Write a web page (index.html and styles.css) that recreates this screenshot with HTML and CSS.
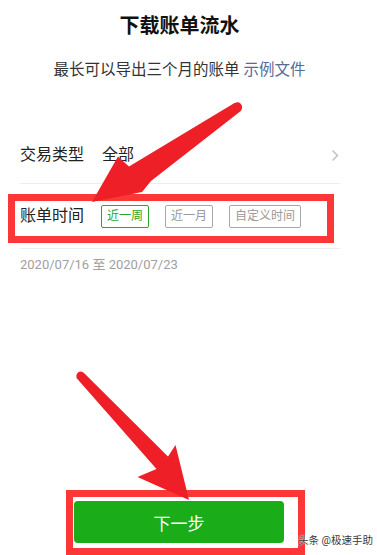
FILE: index.html
```html
<!DOCTYPE html>
<html lang="zh-CN">
<head>
<meta charset="utf-8">
<title>下载账单流水</title>
<link rel="stylesheet" href="styles.css">
</head>
<body>
<div class="page">
  <header class="header">
    <h1 class="title">下载账单流水</h1>
    <p class="subtitle">最长可以导出三个月的账单 <span class="link">示例文件</span></p>
  </header>
  <div class="list">
    <div class="row row-type">
      <span class="label">交易类型</span>
      <span class="value">全部</span>
      <svg class="chevron" width="8" height="13" viewBox="0 0 8 13"><path d="M1.5 1.5 L6.5 6.5 L1.5 11.5" fill="none" stroke="#c4c4c4" stroke-width="1.6"/></svg>
    </div>
    <div class="row row-time">
      <span class="label">账单时间</span>
      <div class="tags">
        <span class="tag tag-active">近一周</span>
        <span class="tag">近一月</span>
        <span class="tag">自定义时间</span>
      </div>
    </div>
  </div>
  <p class="range">2020/07/16 至 2020/07/23</p>
  <button class="next">下一步</button>
</div>

<div class="mark mark-row"></div>
<div class="mark mark-btn"></div>
<div class="watermark">头条 @极速手助</div>

<svg class="arrows" width="377" height="555" viewBox="0 0 377 555">
  <path d="M234.5 103 Q240 100.5 242 106 Q242.5 110 239.5 112 L151 181 L142 192 L92 202 L118 156.5 L129 166.5 Z" fill="#ee1f27"/>
  <path d="M76.5 378 Q75.5 372 81 371.5 Q84 372 85 374 L168 456.5 L175.5 445 L189 500 L137.5 477 L156.5 469 Z" fill="#ee1f27"/>
</svg>
</body>
</html>
```

FILE: styles.css
```css
html, body {
  margin: 0;
  padding: 0;
  background: #ffffff;
}

body {
  width: 377px;
  height: 555px;
  position: relative;
  overflow: hidden;
  font-family: "Roboto", "Noto Sans CJK SC", sans-serif;
  color: #222;
}

.page {
  width: 360px;
}

.header {
  padding-top: 12px;
  text-align: center;
  margin-left: -1px;
}

.title {
  margin: 0;
  font-size: 20px;
  line-height: 28px;
  font-weight: 700;
  color: #111;
}

.subtitle {
  margin: 19px 0 0;
  font-size: 15.5px;
  line-height: 22px;
  color: #333;
}

.link {
  color: #576b95;
}

.list {
  margin-top: 46px;
  padding: 0 20px;
}

.row {
  display: flex;
  align-items: center;
  border-bottom: 1px solid #ededed;
}

.row-type {
  height: 56px;
}

.row-time {
  height: 64px;
}

.label {
  font-size: 16px;
  line-height: 22px;
  color: #222;
}

.value {
  margin-left: 18px;
  font-size: 16px;
  line-height: 22px;
  color: #222;
}

.chevron {
  margin-left: auto;
  margin-right: 1px;
  margin-top: 1px;
}

.tags {
  display: flex;
  gap: 16px;
  margin-left: 17px;
}

.tag {
  box-sizing: border-box;
  height: 23px;
  padding: 0 5px;
  border: 1px solid #a8a8a8;
  border-radius: 2px;
  font-size: 12px;
  line-height: 21px;
  color: #999;
}

.tag-active {
  border-color: #2aa52a;
  color: #2aa52a;
}

.range {
  margin: 7px 0 0 20px;
  font-size: 13px;
  line-height: 18px;
  color: #a0a0a0;
}

.next {
  display: block;
  width: 210px;
  height: 42px;
  margin: 227px 0 0 74px;
  border: none;
  border-radius: 4px;
  background: #1aad19;
  color: #ffffff;
  font-family: "Roboto", "Noto Sans CJK SC", sans-serif;
  font-size: 17px;
  padding: 0;
}

.mark {
  position: absolute;
  box-sizing: border-box;
  border: 7px solid #fd3637;
}

.mark-row {
  left: 8px;
  top: 194px;
  width: 326px;
  height: 49px;
}

.mark-btn {
  left: 66px;
  top: 490px;
  width: 239px;
  height: 65px;
}

.watermark {
  position: absolute;
  left: 298px;
  top: 533px;
  font-size: 10.5px;
  line-height: 15px;
  color: #3a3a3a;
  text-shadow: 0 0 2px #fff, 0 0 1px #fff;
  white-space: nowrap;
}

.arrows {
  position: absolute;
  left: 0;
  top: 0;
  pointer-events: none;
}
```
